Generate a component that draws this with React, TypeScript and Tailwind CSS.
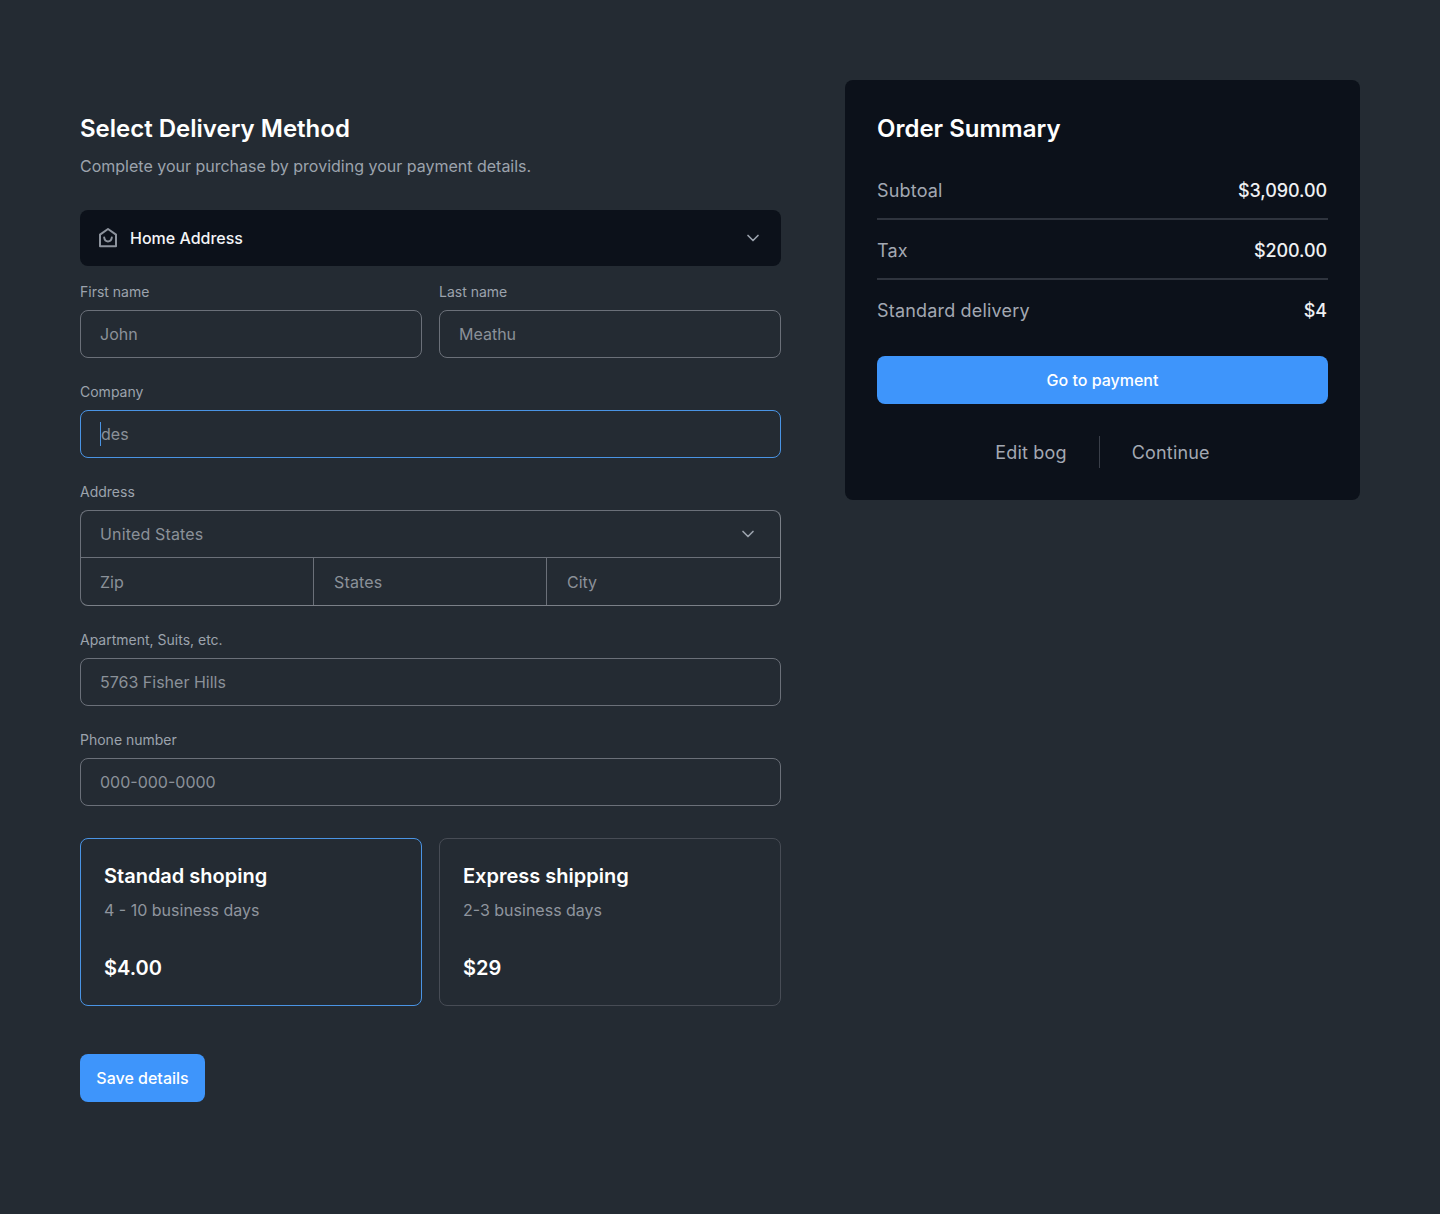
import React from "react";

const Chevron = ({ className }: { className: string }) => (
  <svg viewBox="0 0 24 24" fill="none" stroke="currentColor" strokeWidth="2" strokeLinecap="round" strokeLinejoin="round" className={className}>
    <path d="m6 9 6 6 6-6" />
  </svg>
);

const HomeIcon = () => (
  <svg viewBox="0 0 20 20" fill="none" stroke="#8d939d" strokeWidth="2" strokeLinejoin="round" strokeLinecap="round" className="w-5 h-5 shrink-0">
    <path d="M10 1 18 6.6V18.2H2V6.6Z" />
    <path d="M6.2 9.6C6.6 12 8.2 13.4 10 13.4C11.8 13.4 13.4 12 13.8 9.6" />
  </svg>
);

const Field = ({ label, value, caret, active }: { label: string; value: string; caret?: boolean; active?: boolean }) => (
  <div className="flex flex-col gap-2">
    <span className="text-sm leading-5 text-[#9ca3ad]">{label}</span>
    <div className={`h-12 rounded-lg border flex items-center px-[19px] text-base text-[#8b9199] ${active ? "border-[#4a94e4]" : "border-[#6b7079]"}`}>
      {caret && <span className="w-px h-6 bg-[#4a94e4] -mr-px" />}
      <span className={caret ? "pl-px" : ""}>{value}</span>
    </div>
  </div>
);

const ShipCard = ({ title, days, price, active }: { title: string; days: string; price: string; active?: boolean }) => (
  <div className={`h-[168px] rounded-lg border pl-[23px] pr-6 pt-[23px] ${active ? "border-[#4a94e4]" : "border-[#474c55]"}`}>
    <div className="text-xl leading-7 font-semibold text-white">{title}</div>
    <div className="mt-2 text-base leading-6 text-[#8f959e]">{days}</div>
    <div className="mt-[32px] text-xl leading-7 font-semibold text-white">{price}</div>
  </div>
);

const Row = ({ label, value, border }: { label: string; value: string; border?: boolean }) => (
  <div className={`h-[60px] flex items-center justify-between text-lg ${border ? "border-b-2 border-[#2f343e] pt-[3px]" : "pt-[2px]"}`}>
    <span className="text-[#a3a8b2] tracking-[0.01em]">{label}</span>
    <span className="text-[#eef0f3] font-medium pr-px tracking-[-0.005em]">{value}</span>
  </div>
);

export default function App() {
  return (
    <div className="min-h-[1214px] bg-[#242b33] p-20 flex gap-16 items-start font-['Inter',sans-serif]">
      <div className="w-[701px] shrink-0 pt-8">
        <h2 className="text-2xl leading-8 font-semibold text-white pt-px -mb-px">Select Delivery Method</h2>
        <p className="mt-[10px] text-base leading-6 text-[#9ca3ad]">Complete your purchase by providing your payment details.</p>

        <div className="mt-8 h-14 rounded-lg bg-[#0c111a] flex items-center pl-[18px] pr-[18px] gap-3">
          <HomeIcon />
          <span className="flex-1 text-base font-medium text-[#f4f5f7]">Home Address</span>
          <Chevron className="w-5 h-5 text-[#9ca3ad]" />
        </div>

        <div className="mt-4 grid grid-cols-2 gap-[17px]">
          <Field label="First name" value="John" />
          <Field label="Last name" value="Meathu" />
        </div>

        <div className="mt-6">
          <Field label="Company" value="des" caret active />
        </div>

        <div className="mt-6 flex flex-col gap-2">
          <span className="text-sm leading-5 text-[#9ca3ad]">Address</span>
          <div className="h-24 rounded-lg border border-[#6b7079] border-r-[#7b8088] border-b-[#7b8088] flex flex-col text-base text-[#8b9199]">
            <div className="h-[47px] shrink-0 border-b border-[#6b7079] flex items-center justify-between pl-[19px] pr-[22px]">
              <span className="tracking-[0.01em]">United States</span>
              <Chevron className="w-5 h-5 text-[#9ca3ad]" />
            </div>
            <div className="flex-1 grid grid-cols-3">
              <div className="border-r border-[#6b7079] flex items-center pl-[19px]">Zip</div>
              <div className="border-r border-[#6b7079] flex items-center pl-5 tracking-[0.01em]">States</div>
              <div className="flex items-center pl-5">City</div>
            </div>
          </div>
        </div>

        <div className="mt-6">
          <Field label="Apartment, Suits, etc." value="5763 Fisher Hills" />
        </div>
        <div className="mt-6">
          <Field label="Phone number" value="000-000-0000" />
        </div>

        <div className="mt-8 grid grid-cols-2 gap-[17px]">
          <ShipCard title="Standad shoping" days="4 - 10 business days" price="$4.00" active />
          <ShipCard title="Express shipping" days="2-3 business days" price="$29" />
        </div>

        <button className="mt-12 h-12 w-[125px] rounded-lg bg-[#3e95fb] text-base font-medium text-white">Save details</button>
      </div>

      <div className="w-[515px] shrink-0 rounded-lg bg-[#0c111a] p-8">
        <h2 className="text-2xl leading-8 font-semibold text-white pt-px -mb-px">Order Summary</h2>
        <div className="mt-4">
          <Row label="Subtoal" value="$3,090.00" border />
          <Row label="Tax" value="$200.00" border />
          <Row label="Standard delivery" value="$4" />
        </div>
        <button className="mt-4 h-12 w-full rounded-lg bg-[#3e95fb] text-base font-medium text-white">Go to payment</button>
        <div className="mt-8 h-8 flex items-center justify-center gap-8 text-lg text-[#a3a8b2] tracking-[0.01em]">
          <span className="pt-[2px]">Edit bog</span>
          <span className="w-px h-8 bg-[#3a3f49]" />
          <span className="pt-[2px]">Continue</span>
        </div>
      </div>
    </div>
  );
}
